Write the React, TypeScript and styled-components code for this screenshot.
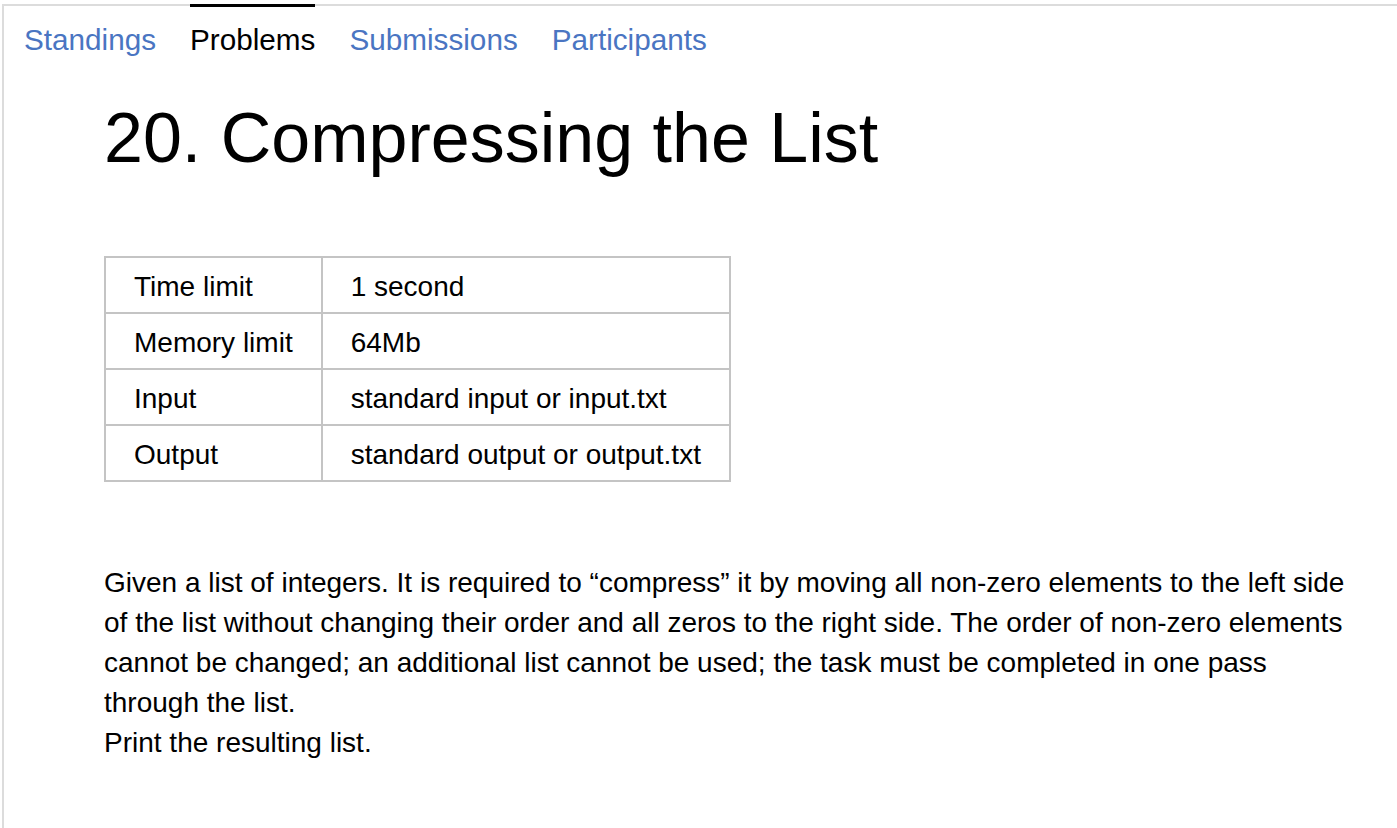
import styled, { createGlobalStyle } from 'styled-components';

const GlobalStyle = createGlobalStyle`
  html, body {
    margin: 0;
    padding: 0;
    background: #fff;
  }
  body {
    font-family: "Liberation Sans", Arial, sans-serif;
    color: #000;
  }
`;

const Frame = styled.div`
  margin: 4px 0 0 2px;
  min-height: 824px;
  box-sizing: border-box;
  border-top: 2px solid #dcdcdc;
  border-left: 2px solid #dcdcdc;
`;

const Tabs = styled.nav`
  display: flex;
  gap: 34px;
  margin-top: -2px;
  padding-left: 20px;
`;

const Tab = styled.a<{ $active?: boolean }>`
  display: block;
  padding-top: 16px;
  border-top: 3px solid ${(p) => (p.$active ? '#000' : 'transparent')};
  font-size: 29.7px;
  line-height: 34px;
  color: ${(p) => (p.$active ? '#000' : '#4a75c2')};
  text-decoration: none;
  cursor: pointer;
`;

const Content = styled.main`
  padding-left: 100px;
`;

const Title = styled.h1`
  margin: 41px 0 0;
  font-size: 70px;
  font-weight: normal;
  line-height: 80px;
`;

const Limits = styled.table`
  margin-top: 78px;
  border-collapse: collapse;
  font-size: 28px;
  line-height: 32px;
`;

const Cell = styled.td`
  border: 2px solid #c4c4c4;
  padding: 13px 28px 9px;
  white-space: nowrap;
`;

const Statement = styled.div`
  margin-top: 81px;
  width: 1250px;
  font-size: 28px;
  line-height: 40px;

  p {
    margin: 0;
  }
`;

const tabs = ['Standings', 'Problems', 'Submissions', 'Participants'];

const limits = [
  ['Time limit', '1 second'],
  ['Memory limit', '64Mb'],
  ['Input', 'standard input or input.txt'],
  ['Output', 'standard output or output.txt'],
];

const App = () => {
  return (
    <>
      <GlobalStyle />
      <Frame>
        <Tabs>
          {tabs.map((t) => (
            <Tab key={t} $active={t === 'Problems'}>
              {t}
            </Tab>
          ))}
        </Tabs>
        <Content>
          <Title>20. Compressing the List</Title>
          <Limits>
            <tbody>
              {limits.map(([name, value]) => (
                <tr key={name}>
                  <Cell>{name}</Cell>
                  <Cell>{value}</Cell>
                </tr>
              ))}
            </tbody>
          </Limits>
          <Statement>
            <p>
              Given a list of integers. It is required to “compress” it by moving all non-zero
              elements to the left side of the list without changing their order and all zeros to
              the right side. The order of non-zero elements cannot be changed; an additional list
              cannot be used; the task must be completed in one pass through the list.
            </p>
            <p>Print the resulting list.</p>
          </Statement>
        </Content>
      </Frame>
    </>
  );
};

export default App;
